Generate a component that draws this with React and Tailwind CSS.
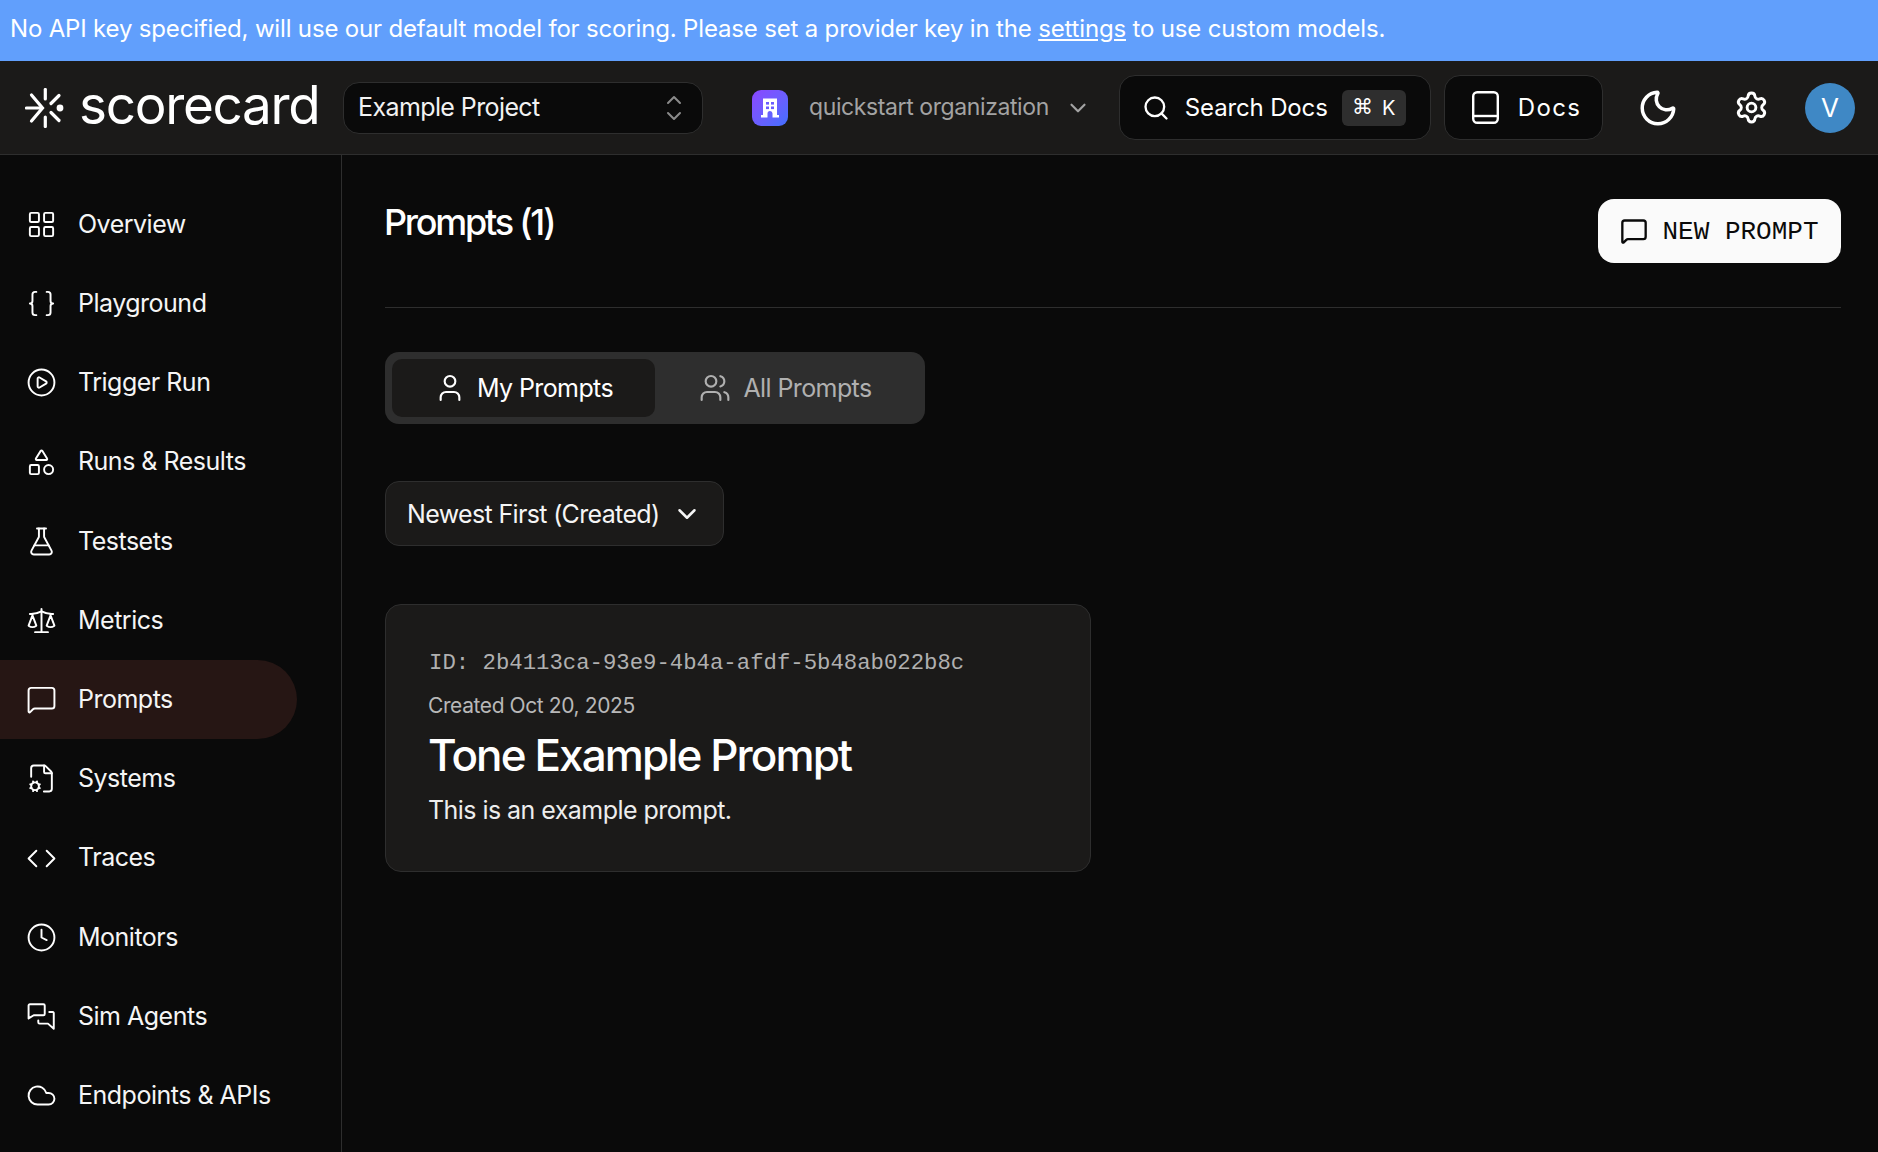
import {
  LayoutGrid, Braces, CirclePlay, Shapes, FlaskConical, Scale, MessageSquare, FileCog,
  Clock, Cloud, ChevronUp, ChevronDown, Search, Moon, Settings, User, Users,
} from 'lucide-react';

const SimAgents = (props) => (
  <svg viewBox="0 0 24 24" fill="none" stroke="currentColor" strokeWidth="1.5" strokeLinecap="round" strokeLinejoin="round" {...props}>
    <path d="M2 13.5V3.5a1 1 0 0 1 1-1h10.5a1 1 0 0 1 1 1V10a1 1 0 0 1-1 1H6z" />
    <path d="M18 8.5h3a1 1 0 0 1 .5 1v12l-4.5-4h-6.5a1 1 0 0 1-1-1V15" />
  </svg>
);

const Code = (props) => (
  <svg viewBox="0 0 24 24" fill="none" stroke="currentColor" strokeWidth="1.5" strokeLinecap="round" strokeLinejoin="round" {...props}>
    <path d="M8 6l-6 6 6 6" />
    <path d="M16 6l6 6-6 6" />
  </svg>
);

const navItems = [
  { label: 'Overview', icon: LayoutGrid },
  { label: 'Playground', icon: Braces },
  { label: 'Trigger Run', icon: CirclePlay },
  { label: 'Runs & Results', icon: Shapes },
  { label: 'Testsets', icon: FlaskConical },
  { label: 'Metrics', icon: Scale },
  { label: 'Prompts', icon: MessageSquare, active: true },
  { label: 'Systems', icon: FileCog },
  { label: 'Traces', icon: Code },
  { label: 'Monitors', icon: Clock },
  { label: 'Sim Agents', icon: SimAgents },
  { label: 'Endpoints & APIs', icon: Cloud },
];

function Logo() {
  return (
    <svg viewBox="0 0 40 40" className="w-[40px] h-[40px] shrink-0" fill="none" stroke="white" strokeWidth="3.2" strokeLinecap="round" strokeLinejoin="miter">
      <path d="M20.3 1.5V11" />
      <path d="M20.3 29V38.5" />
      <path d="M34 7.5L26 15.5" />
      <path d="M26 24.5L34 32.5" />
      <path d="M1.5 20H17" />
      <path d="M6.5 7L17.5 20L6.5 33" />
      <circle cx="35" cy="20" r="3.4" fill="white" stroke="none" />
    </svg>
  );
}

function OrgIcon() {
  return (
    <div className="w-[36px] h-[36px] rounded-[9px] bg-gradient-to-br from-[#8a46ff] to-[#3f6fff] flex items-center justify-center shrink-0">
      <svg viewBox="0 0 18 20" className="w-[18px] h-[20px]" fill="white">
        <path d="M2 0.5h14v16.5h2v2.5h-6.5v-4a2.5 2.5 0 0 0-5 0v4H0V17h2z" />
        <rect x="5" y="4" width="3" height="2.6" fill="#6a5cff" />
        <rect x="10" y="4" width="3" height="2.6" fill="#6a5cff" />
        <rect x="5" y="8.5" width="3" height="2.6" fill="#6a5cff" />
        <rect x="10" y="8.5" width="3" height="2.6" fill="#6a5cff" />
      </svg>
    </div>
  );
}

function BookIcon() {
  return (
    <svg viewBox="0 0 27 33" className="w-[27px] h-[33px] shrink-0" fill="none" stroke="currentColor" strokeWidth="2.4">
      <rect x="1.2" y="1.2" width="24.6" height="30.6" rx="4" />
      <path d="M1.2 25H25.8" />
    </svg>
  );
}

function Header() {
  return (
    <header className="h-[94px] shrink-0 bg-[#1b1a19] border-b border-[#2e2e2e] flex items-center pl-[25px]">
      <Logo />
      <span className="ml-[14px] w-[241px] text-[53px] leading-none text-white tracking-[-1.3px] pb-[4px] whitespace-nowrap">scorecard</span>
      <button className="ml-[23px] w-[360px] h-[52px] rounded-[16px] bg-[#0a0a0a] border border-[#2e2e2e] flex items-center justify-between pl-[14px] pr-[16px] text-[25px] text-[#f2f2f2] tracking-[-0.6px]">
        <span>Example Project</span>
        <span className="flex flex-col text-[#8a8a8a]">
          <ChevronUp size={24} className="-mb-[8px]" />
          <ChevronDown size={24} />
        </span>
      </button>
      <div className="ml-[49px] flex items-center">
        <OrgIcon />
        <span className="ml-[21px] text-[23px] text-[#a3a3a3] tracking-[-0.4px]">quickstart organization</span>
        <ChevronDown size={26} className="ml-[16px] text-[#a3a3a3]" />
      </div>
      <button className="ml-[28px] w-[312px] h-[65px] rounded-[16px] bg-[#0a0a0a] border border-[#2e2e2e] flex items-center pl-[22px] text-white">
        <Search size={28} strokeWidth={2} />
        <span className="ml-[15px] text-[24px] tracking-[-0.15px]">Search Docs</span>
        <span className="ml-[14px] w-[64px] h-[36px] rounded-[6px] bg-[#2e2e2e] flex items-center justify-center gap-[9px] text-[20px]">
          <span className="font-['DejaVu_Sans',sans-serif] text-[21px]">⌘</span>K
        </span>
      </button>
      <button className="ml-[13px] w-[159px] h-[65px] rounded-[16px] bg-[#0a0a0a] border border-[#2e2e2e] flex items-center pl-[27px] text-white">
        <BookIcon />
        <span className="ml-[19px] text-[24px] tracking-[1.3px]">Docs</span>
      </button>
      <Moon size={42} strokeWidth={2} className="ml-[34px] text-white" />
      <Settings size={35} strokeWidth={2} className="ml-[55px] text-white" />
      <div className="ml-[36px] w-[50px] h-[50px] rounded-full bg-[#3f88c5] flex items-center justify-center text-[26px] text-white">V</div>
    </header>
  );
}

function Sidebar() {
  return (
    <aside className="w-[342px] shrink-0 border-r border-[#2e2e2e] pt-[30px] pr-[44px]">
      {navItems.map(({ label, icon: Icon, active }) => (
        <div
          key={label}
          className={`h-[79.2px] flex items-center pl-[26px] rounded-r-full ${active ? 'bg-[#261614]' : ''}`}
        >
          <Icon className="w-[31px] h-[31px] shrink-0 text-white" strokeWidth={1.5} />
          <span className="ml-[21px] text-[25px] text-[#f5f5f5] tracking-[-0.5px] whitespace-nowrap">{label}</span>
        </div>
      ))}
    </aside>
  );
}

export default function App() {
  return (
    <div className="h-screen w-full overflow-hidden flex flex-col bg-[#0a0a0a] font-['Inter',sans-serif]">
      <div className="h-[61px] shrink-0 bg-[#619ffc] flex items-center pl-[10px] pb-[4px] text-[24px] text-white tracking-[-0.17px]">
        <span>
          No API key specified, will use our default model for scoring. Please set a provider key in the{' '}
          <span className="underline">settings</span> to use custom models.
        </span>
      </div>
      <Header />
      <div className="flex-1 flex min-h-0">
        <Sidebar />
        <main className="flex-1 pl-[43px] pr-[37px] pt-[44px]">
          <div className="flex items-start justify-between h-[109px] border-b border-[#2e2e2e]">
            <h1 className="-ml-[1px] mt-[1px] text-[36px] leading-[44px] font-medium text-white tracking-[-2.25px]">Prompts (1)</h1>
            <button className="w-[243px] h-[64px] rounded-[16px] bg-[#fafafa] flex items-center justify-center gap-[14px] text-[#0a0a0a] text-[26px] font-['Liberation_Mono',monospace]">
              <MessageSquare size={28} strokeWidth={2} />
              <span className="mt-[2px]">NEW PROMPT</span>
            </button>
          </div>
          <div className="mt-[44px] w-[540px] h-[72px] rounded-[14px] bg-[#2e2e2e] p-[7px] flex text-[25px] tracking-[-0.6px]">
            <div className="w-[263px] rounded-[10px] bg-[#1b1a19] flex items-center justify-center gap-[11px] text-white">
              <User size={32} strokeWidth={1.6} />
              <span className="mt-[2px]">My Prompts</span>
            </div>
            <div className="flex-1 flex items-center justify-center gap-[12px] pr-[2px] text-[#b0b0b0]">
              <Users size={32} strokeWidth={1.6} />
              <span className="mt-[2px]">All Prompts</span>
            </div>
          </div>
          <button className="mt-[57px] w-[339px] h-[65px] rounded-[14px] bg-[#1b1a19] border border-[#2e2e2e] flex items-center pl-[21px] text-[25px] text-[#f5f5f5] tracking-[-0.65px]">
            <span className="mt-[2px]">Newest First (Created)</span>
            <ChevronDown size={30} strokeWidth={2} className="ml-[13px]" />
          </button>
          <div className="mt-[58px] w-[706px] h-[268px] rounded-[16px] bg-[#1b1a19] border border-[#2e2e2e] px-[42px] pt-[42px]">
            <div className="ml-[1px] text-[22.3px] leading-[32px] text-[#b0b0b0] font-['Liberation_Mono',monospace]">ID: 2b4113ca-93e9-4b4a-afdf-5b48ab022b8c</div>
            <div className="mt-[11px] text-[21px] leading-[32px] text-[#b8b8b8] tracking-[-0.4px]">Created Oct 20, 2025</div>
            <div className="mt-[5px] text-[44px] leading-[56px] font-medium text-white tracking-[-1.9px]">Tone Example Prompt</div>
            <div className="mt-[9px] text-[25px] leading-[36px] text-[#ededed] tracking-[-0.55px]">This is an example prompt.</div>
          </div>
        </main>
      </div>
    </div>
  );
}
